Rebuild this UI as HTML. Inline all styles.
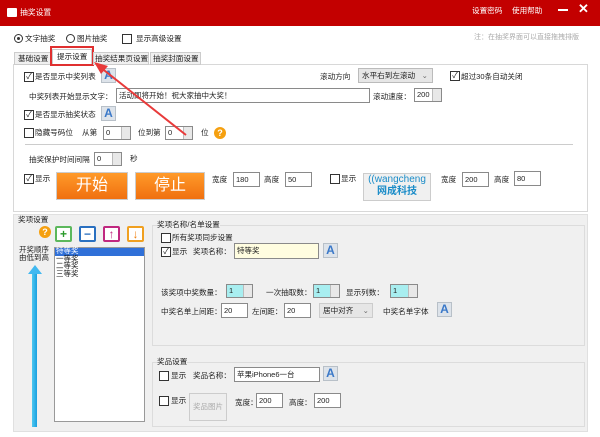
<!DOCTYPE html><html><head><meta charset="utf-8"><style>
*{margin:0;padding:0;box-sizing:border-box}
body{width:600px;height:437px;position:relative;overflow:hidden;background:#fff;font-family:"Liberation Sans","Noto Sans CJK SC",sans-serif;font-size:7.6px;color:#222}
.a{position:absolute;white-space:nowrap}
.cb{position:absolute;width:10px;height:10px;border:1px solid #333;background:#fff;font-size:8px;line-height:8px;text-align:center}
.in{position:absolute;border:1px solid #8a8a8a;background:#fff;height:15px;font-size:7.5px;line-height:13px;padding-left:2px}
.sp{position:absolute;border:1px solid #8a8a8a;background:#fff;height:14px;font-size:7.5px;line-height:12px;padding-left:2px}
.sp:after{content:"";position:absolute;right:0;top:0;width:8px;height:12px;background:#e8e8e8;border-left:1px solid #bbb}
.A{position:absolute;width:15px;height:15px;background:#dde3ea;border:1px solid #b8c0c8;color:#3a78c8;font-weight:bold;font-size:12px;line-height:13px;text-align:center}
.q{position:absolute;width:12px;height:12px;border-radius:50%;background:#f5a010;color:#fff;font-weight:bold;font-size:9px;line-height:12px;text-align:center}
.btn{position:absolute;width:17px;height:16px;border:2px solid;border-radius:2px;font-weight:bold;font-size:12px;line-height:12px;text-align:center;background:#fff}
</style></head><body>
<div class="a" style="left:0;top:0;width:600px;height:26px;background:#c30000"></div>
<div class="a" style="left:7px;top:8px;width:10px;height:9px;background:#fff;border-radius:1px"></div>
<div class="a" style="left:20px;top:7px;color:#fff;font-size:7.8px">抽奖设置</div>
<div class="a" style="left:472px;top:5px;color:#fff">设置密码</div>
<div class="a" style="left:512px;top:5px;color:#fff">使用帮助</div>
<div class="a" style="left:558px;top:9px;width:10px;height:2px;background:#fff"></div>
<div class="a" style="left:578px;top:1px;color:#fff;font-size:13px;font-weight:bold">✕</div>

<div class="a" style="left:14px;top:34px;width:9px;height:9px;border:1px solid #333;border-radius:50%"></div>
<div class="a" style="left:17px;top:37px;width:3px;height:3px;background:#333;border-radius:50%"></div>
<div class="a" style="left:25px;top:33px">文字抽奖</div>
<div class="a" style="left:66px;top:34px;width:9px;height:9px;border:1px solid #333;border-radius:50%"></div>
<div class="a" style="left:77px;top:33px">图片抽奖</div>
<div class="cb" style="left:122px;top:34px"></div>
<div class="a" style="left:136px;top:33px">显示高级设置</div>
<div class="a" style="left:474px;top:32px;color:#aaa;font-size:7px">注：在抽奖界面可以直接拖拽排版</div>

<div class="a" style="left:13px;top:64px;width:575px;height:148px;border:1px solid #d8d8d8"></div>
<div class="a" style="left:14px;top:52px;width:37px;height:13px;border:1px solid #ccc;background:#f0f0f0;padding-left:3px;line-height:11px">基础设置</div>
<div class="a" style="left:52px;top:49px;width:40px;height:16px;border:1px solid #ccc;border-bottom:none;background:#fff;padding-left:4px;line-height:14px">提示设置</div>
<div class="a" style="left:50px;top:46px;width:44px;height:20px;border:2px solid #e03030"></div>
<div class="a" style="left:93px;top:52px;width:56px;height:13px;border:1px solid #ccc;background:#f0f0f0;padding-left:1px;line-height:11px">抽奖结果页设置</div>
<div class="a" style="left:150px;top:52px;width:51px;height:13px;border:1px solid #ccc;background:#f0f0f0;padding-left:2px;line-height:11px">抽奖封面设置</div>

<div class="cb" style="left:24px;top:72px">✓</div><div class="a" style="left:35px;top:71px">是否显示中奖列表</div>
<div class="A" style="left:101px;top:68px">A</div>
<div class="a" style="left:320px;top:71px">滚动方向</div>
<div class="a" style="left:358px;top:68px;width:75px;height:15px;border:1px solid #bbb;background:#e6e6e6;padding-left:3px;line-height:13px">水平右到左滚动 <span style="float:right;margin-right:4px;color:#666">⌄</span></div>
<div class="cb" style="left:450px;top:71px">✓</div><div class="a" style="left:461px;top:71px">超过30条自动关闭</div>

<div class="a" style="left:29px;top:91px">中奖列表开始显示文字：</div>
<div class="in" style="left:116px;top:88px;width:254px">活动即将开始！祝大家抽中大奖！</div>
<div class="a" style="left:373px;top:91px">滚动速度：</div>
<div class="sp" style="left:414px;top:88px;width:28px">200</div>

<div class="cb" style="left:24px;top:110px">✓</div><div class="a" style="left:35px;top:109px">是否显示抽奖状态</div>
<div class="A" style="left:101px;top:106px">A</div>

<div class="cb" style="left:24px;top:128px"></div><div class="a" style="left:35px;top:127px">隐藏号码位</div>
<div class="a" style="left:82px;top:127px">从第</div>
<div class="sp" style="left:103px;top:126px;width:28px">0</div>
<div class="a" style="left:138px;top:127px">位到第</div>
<div class="sp" style="left:165px;top:126px;width:28px">0</div>
<div class="a" style="left:201px;top:127px">位</div>
<div class="q" style="left:214px;top:127px">?</div>
<div class="a" style="left:25px;top:144px;width:548px;height:1px;background:#ccc"></div>

<div class="a" style="left:29px;top:154px">抽奖保护时间间隔</div>
<div class="sp" style="left:94px;top:152px;width:28px">0</div>
<div class="a" style="left:130px;top:153px">秒</div>

<div class="cb" style="left:24px;top:174px">✓</div><div class="a" style="left:35px;top:173px">显示</div>
<div class="a" style="left:56px;top:172px;width:72px;height:28px;background:linear-gradient(#ff9a2a,#f07010);border:1px solid #ccc;color:#fff;font-size:16px;text-align:center;line-height:26px">开始</div>
<div class="a" style="left:135px;top:172px;width:70px;height:28px;background:linear-gradient(#ff9a2a,#f07010);border:1px solid #ccc;color:#fff;font-size:16px;text-align:center;line-height:26px">停止</div>
<div class="a" style="left:212px;top:174px">宽度</div><div class="in" style="left:233px;top:172px;width:27px">180</div>
<div class="a" style="left:264px;top:174px">高度</div><div class="in" style="left:285px;top:172px;width:27px">50</div>
<div class="cb" style="left:330px;top:174px"></div><div class="a" style="left:341px;top:173px">显示</div>
<div class="a" style="left:363px;top:173px;width:68px;height:28px;background:#f0f0f0;border:1px solid #ccc;color:#1a8cc8;text-align:center;line-height:12px;font-size:10px">((wangcheng<br><b>网成科技</b></div>
<div class="a" style="left:441px;top:174px">宽度</div><div class="in" style="left:462px;top:172px;width:27px">200</div>
<div class="a" style="left:494px;top:174px">高度</div><div class="in" style="left:514px;top:171px;width:27px">80</div>

<div class="a" style="left:13px;top:214px;width:575px;height:218px;background:#f0f0f0;border:1px solid #e0e0e0"></div>
<div class="a" style="left:18px;top:214px">奖项设置</div>
<div class="q" style="left:39px;top:226px">?</div>
<div class="btn" style="left:55px;top:226px;border-color:#5cb85c;color:#2a9a2a">+</div>
<div class="btn" style="left:79px;top:226px;border-color:#2a70c0;color:#2a70c0">−</div>
<div class="btn" style="left:103px;top:226px;border-color:#c02880;color:#c02880">↑</div>
<div class="btn" style="left:127px;top:226px;border-color:#f0a020;color:#f08010">↓</div>
<div class="a" style="left:19px;top:246px;line-height:8px;font-size:7.5px">开奖顺序<br>由低到高</div>
<div class="a" style="left:54px;top:247px;width:91px;height:175px;background:#fff;border:1px solid #999"></div>
<div class="a" style="left:55px;top:248px;width:89px;height:8px;background:#3070d8"></div>
<div class="a" style="left:56px;top:247px;line-height:7.5px;font-size:7.5px"><span style="color:#fff">特等奖</span><br>一等奖<br>二等奖<br>三等奖</div>
<div class="a" style="left:32px;top:273px;width:5px;height:154px;background:linear-gradient(90deg,#50c8f0,#1aa0e0)"></div>
<div class="a" style="left:28px;top:265px;width:0;height:0;border-left:7px solid transparent;border-right:7px solid transparent;border-bottom:9px solid #40b8f0"></div>

<div class="a" style="left:152px;top:225px;width:433px;height:121px;border:1px solid #dcdcdc"></div>
<div class="a" style="left:157px;top:219px;background:#f0f0f0">奖项名称/名单设置</div>
<div class="cb" style="left:161px;top:233px"></div><div class="a" style="left:172px;top:232px">所有奖项同步设置</div>
<div class="cb" style="left:161px;top:247px">✓</div><div class="a" style="left:172px;top:246px">显示</div>
<div class="a" style="left:193px;top:246px">奖项名称：</div>
<div class="in" style="left:234px;top:243px;width:85px;height:16px;background:#fffde0">特等奖</div>
<div class="A" style="left:323px;top:243px">A</div>

<div class="a" style="left:161px;top:287px">该奖项中奖数量：</div>
<div class="sp" style="left:226px;top:284px;width:27px;background:#a8eef0">1</div>
<div class="a" style="left:266px;top:287px">一次抽取数：</div>
<div class="sp" style="left:313px;top:284px;width:27px;background:#a8eef0">1</div>
<div class="a" style="left:346px;top:287px">显示列数：</div>
<div class="sp" style="left:390px;top:284px;width:28px;background:#a8eef0">1</div>

<div class="a" style="left:161px;top:306px">中奖名单上间距：</div>
<div class="in" style="left:221px;top:303px;width:27px">20</div>
<div class="a" style="left:252px;top:306px">左间距：</div>
<div class="in" style="left:284px;top:303px;width:27px">20</div>
<div class="a" style="left:319px;top:303px;width:54px;height:15px;border:1px solid #ccc;background:#e6e6e6;padding-left:3px;line-height:13px">居中对齐 <span style="float:right;margin-right:3px;color:#666">⌄</span></div>
<div class="a" style="left:383px;top:306px">中奖名单字体</div>
<div class="A" style="left:437px;top:302px">A</div>

<div class="a" style="left:152px;top:362px;width:433px;height:65px;border:1px solid #dcdcdc"></div>
<div class="a" style="left:157px;top:356px;background:#f0f0f0">奖品设置</div>
<div class="cb" style="left:159px;top:371px"></div><div class="a" style="left:171px;top:370px">显示</div>
<div class="a" style="left:193px;top:370px">奖品名称：</div>
<div class="in" style="left:234px;top:367px;width:86px;font-size:7.5px">苹果iPhone6一台</div>
<div class="A" style="left:323px;top:366px">A</div>
<div class="cb" style="left:159px;top:396px"></div><div class="a" style="left:171px;top:395px">显示</div>
<div class="a" style="left:189px;top:393px;width:38px;height:28px;background:#eee;border:1px solid #ccc;color:#aaa;font-size:7.5px;text-align:center;line-height:26px">奖品图片</div>
<div class="a" style="left:235px;top:397px">宽度：</div>
<div class="in" style="left:256px;top:393px;width:27px">200</div>
<div class="a" style="left:289px;top:397px">高度：</div>
<div class="in" style="left:314px;top:393px;width:27px">200</div>

<svg class="a" style="left:0;top:0" width="600" height="437"><line x1="186" y1="135" x2="100" y2="67" stroke="#e83a3a" stroke-width="2"/><polygon points="94,62 108,66 101,74" fill="#e83a3a"/></svg>
</body></html>
